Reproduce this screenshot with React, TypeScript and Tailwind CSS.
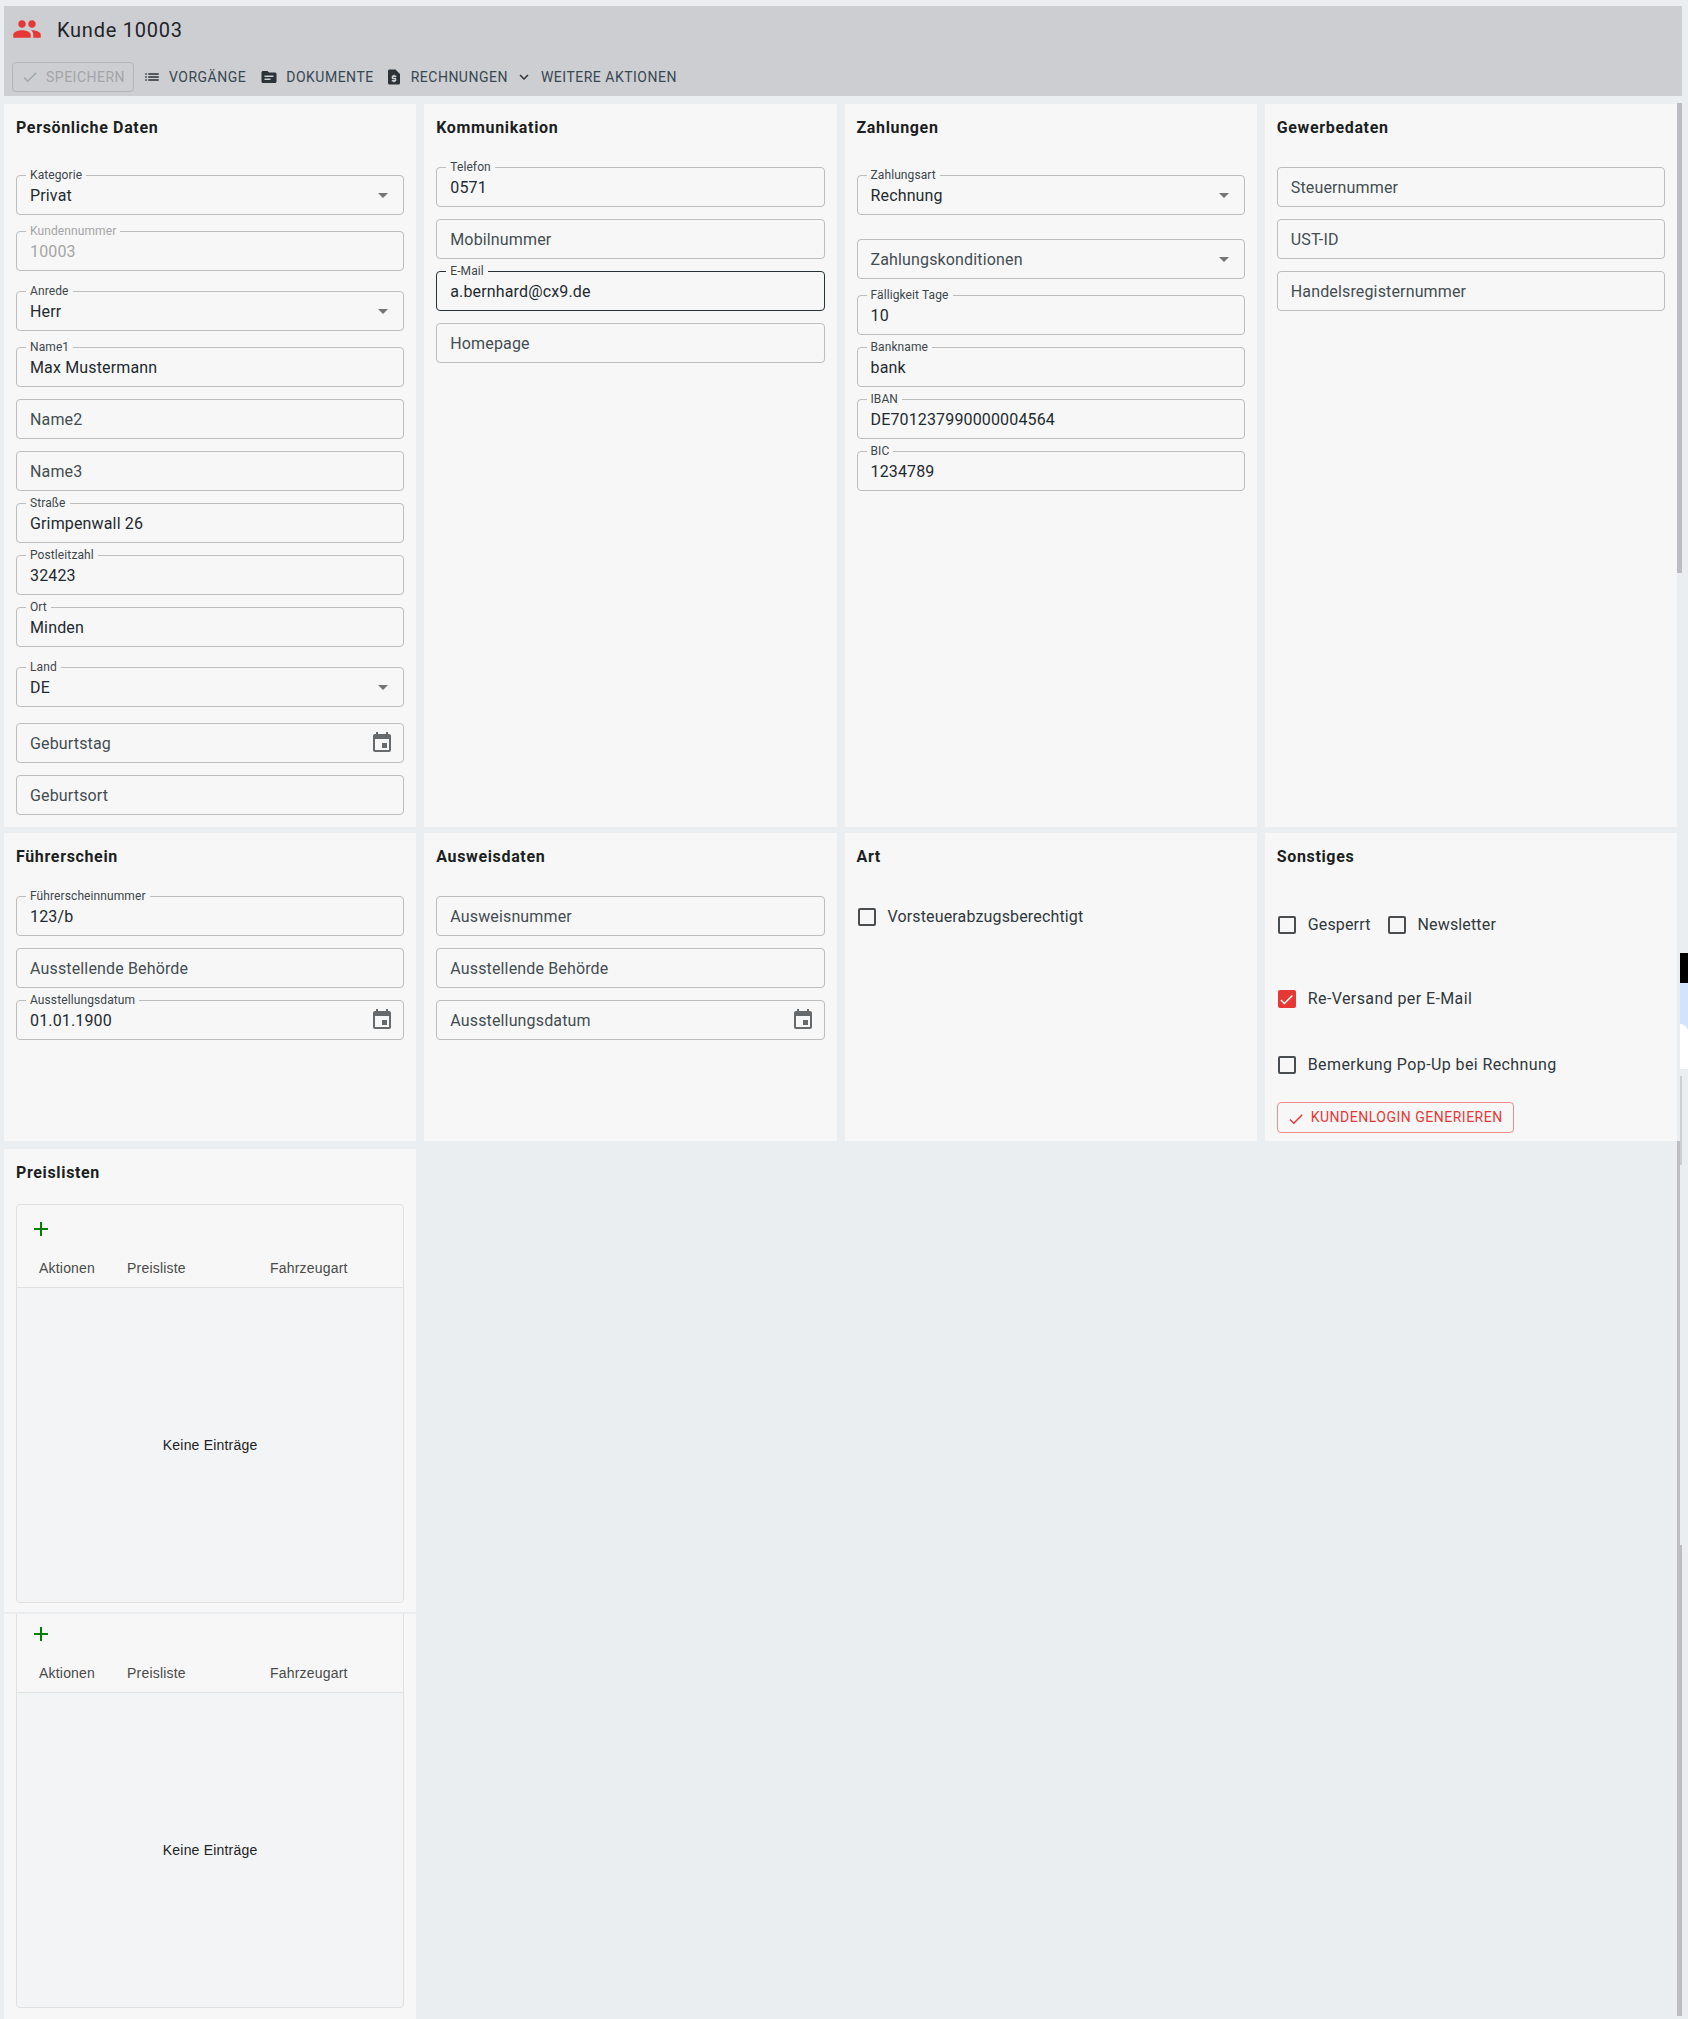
import React from "react";

const ICONS = {
  people:
    "M16 11c1.66 0 2.99-1.34 2.99-3S17.66 5 16 5c-1.66 0-3 1.34-3 3s1.34 3 3 3zm-8 0c1.66 0 2.99-1.34 2.99-3S9.66 5 8 5C6.34 5 5 6.34 5 8s1.34 3 3 3zm0 2c-2.33 0-7 1.17-7 3.5V19h14v-2.5c0-2.33-4.67-3.5-7-3.5zm8 0c-.29 0-.62.02-.97.05 1.16.84 1.97 1.97 1.97 3.45V19h6v-2.5c0-2.33-4.67-3.5-7-3.5z",
  check: "M9 16.17 4.83 12l-1.42 1.41L9 19 21 7l-1.41-1.41z",
  list: "M3 13h2v-2H3v2zm0 4h2v-2H3v2zm0-8h2V7H3v2zm4 4h14v-2H7v2zm0 4h14v-2H7v2zM7 7v2h14V7H7z",
  topic:
    "M20 6h-8l-2-2H4c-1.1 0-1.99.9-1.99 2L2 18c0 1.1.9 2 2 2h16c1.1 0 2-.9 2-2V8c0-1.1-.9-2-2-2zm-6 10H6v-2h8v2zm4-4H6v-2h12v2z",
  request:
    "M14 2H6c-1.1 0-1.99.9-1.99 2L4 20c0 1.1.89 2 1.99 2H18c1.1 0 2-.9 2-2V8l-6-6zm1 10h-4v1h3c.55 0 1 .45 1 1v3c0 .55-.45 1-1 1h-1v1h-2v-1H9v-2h4v-1h-3c-.55 0-1-.45-1-1v-3c0-.55.45-1 1-1h1V9h2v1h2v2z",
  expand: "M16.59 8.59 12 13.17 7.41 8.59 6 10l6 6 6-6z",
  event:
    "M17 12h-5v5h5v-5zM16 1v2H8V1H6v2H5c-1.11 0-1.99.9-1.99 2L3 19c0 1.1.89 2 2 2h14c1.1 0 2-.9 2-2V5c0-1.1-.9-2-2-2h-1V1h-2zm3 18H5V8h14v11z",
  arrow: "M7 10l5 5 5-5z",
  add: "M19 13h-6v6h-2v-6H5v-2h6V5h2v6h6v2z",
};

function Icon({ name, className }: { name: keyof typeof ICONS; className: string }) {
  return (
    <svg viewBox="0 0 24 24" fill="currentColor" className={`shrink-0 ${className}`}>
      <path d={ICONS[name]} />
    </svg>
  );
}

function Field({
  label,
  value,
  disabled,
  focused,
  calendar,
}: {
  label?: string;
  value?: string;
  disabled?: boolean;
  focused?: boolean;
  calendar?: boolean;
}) {
  const floating = label && value;
  return (
    <div
      className={`relative h-10 rounded-[4px] border flex items-center pl-[13px] pr-[9px] ${
        focused ? "border-[#263238]" : "border-[#bdbdbd]"
      }`}
    >
      {floating && (
        <span
          className={`absolute -top-[7px] left-[9px] px-1 bg-[#f7f7f7] text-[12px] leading-3 tracking-[0.1px] ${
            disabled ? "text-[#a5a5a5]" : "text-[#3d464b]"
          }`}
        >
          {label}
        </span>
      )}
      <span
        className={`flex-1 pt-[2px] text-[16px] tracking-[0.15px] ${
          disabled ? "text-[#a5a5a5]" : value ? "text-[#1f2a30]" : "text-[#444d52]"
        }`}
      >
        {value || label}
      </span>
      {calendar && <Icon name="event" className="w-6 h-6 text-[#666a6d]" />}
    </div>
  );
}

function SelectField({ label, value }: { label: string; value?: string }) {
  return (
    <div className="pt-2 pb-1">
      <div className="relative h-10 rounded-[4px] border border-[#bdbdbd] flex items-center pl-[13px] pr-[8px]">
        {value && (
          <span className="absolute -top-[7px] left-[9px] px-1 bg-[#f7f7f7] text-[12px] leading-3 tracking-[0.1px] text-[#3d464b]">
            {label}
          </span>
        )}
        <span className={`flex-1 pt-[2px] text-[16px] tracking-[0.15px] ${value ? "text-[#1f2a30]" : "text-[#444d52]"}`}>
          {value || label}
        </span>
        <Icon name="arrow" className="w-6 h-6 text-[#757575]" />
      </div>
    </div>
  );
}

function Panel({ title, children, className = "" }: { title: string; children?: React.ReactNode; className?: string }) {
  return (
    <section className={`bg-[#f7f7f7] px-3 pt-3 ${className}`}>
      <h2 className="h-6 text-[16px] leading-6 font-bold tracking-[0.65px] text-[#1c1f22] mb-[27px]">{title}</h2>
      {children}
    </section>
  );
}

function Check({
  label,
  checked,
  wide,
  className = "",
}: {
  label: string;
  checked?: boolean;
  wide?: boolean;
  className?: string;
}) {
  return (
    <div className={`flex items-center h-6 gap-3 pl-px ${className}`}>
      {checked ? (
        <div className="w-[18px] h-[18px] rounded-[2px] bg-[#e53935] flex items-center justify-center text-white">
          <Icon name="check" className="w-[17px] h-[17px]" />
        </div>
      ) : (
        <div className="w-[18px] h-[18px] rounded-[2px] border-2 border-[#4a4d50]" />
      )}
      <span className={`text-[16px] text-[#30383d] ${wide ? "tracking-[0.4px]" : "tracking-[0.15px]"}`}>{label}</span>
    </div>
  );
}

function PriceTable({ className = "" }: { className?: string }) {
  return (
    <div className={`h-[399px] rounded-[4px] border border-[#e0e0e0] flex flex-col font-['Liberation_Sans',Arial,sans-serif] ${className}`}>
      <div className="h-[83px] shrink-0 border-b border-[#e0e0e0] pl-3">
        <Icon name="add" className="w-6 h-6 mt-3 text-[#008000]" />
        <div className="grid grid-cols-[88px_143px_1fr] pl-2.5 mt-[18px] text-[14px] leading-[18px] tracking-[0.2px] text-[#4a4a4a]">
          <span>Aktionen</span>
          <span>Preisliste</span>
          <span>Fahrzeugart</span>
        </div>
      </div>
      <div className="flex-1 bg-[#f3f4f6] rounded-b-[4px] flex items-center justify-center text-[14px] tracking-[0.2px] text-[#222222]">
        Keine Einträge
      </div>
    </div>
  );
}

function ToolButton({
  icon,
  label,
  className = "",
}: {
  icon: keyof typeof ICONS;
  label: string;
  className?: string;
}) {
  return (
    <div className={`flex items-center gap-2 ${className}`}>
      <Icon name={icon} className="w-[18px] h-[18px] text-[#2b3238]" />
      <span className="text-[14px] tracking-[0.5px] uppercase text-[#37474f]">{label}</span>
    </div>
  );
}

export default function App() {
  return (
    <div className="relative h-[2019px] overflow-hidden bg-[#eaeef1] pl-1 pr-[11px] pt-[6px] font-['Roboto',sans-serif]">
      <header className="h-[90px] mr-[-5px] bg-[#cdced2] px-2 pt-2">
        <div className="flex items-center h-[30px]">
          <Icon name="people" className="w-[30px] h-[30px] text-[#e53935]" />
          <h1 className="ml-[15px] pt-[2px] text-[20px] tracking-[0.75px] text-[#1f2428]">Kunde 10003</h1>
        </div>
        <div className="flex items-center h-[30px] mt-[18px]">
          <div className="w-[122px] h-[30px] rounded-[4px] border border-[#b4b5b9] flex items-center pl-[8px] gap-[7px] text-[#a4a5a8]">
            <Icon name="check" className="w-[18px] h-[18px]" />
            <span className="text-[14px] tracking-[0.5px] uppercase">Speichern</span>
          </div>
          <ToolButton icon="list" label="Vorgänge" className="ml-[9px]" />
          <ToolButton icon="topic" label="Dokumente" className="ml-[14px]" />
          <ToolButton icon="request" label="Rechnungen" className="ml-[11px]" />
          <ToolButton icon="expand" label="Weitere Aktionen" className="ml-[7px]" />
        </div>
      </header>

      <main className="grid grid-cols-4 grid-rows-[723px_308px] gap-x-2 gap-y-[6px] mt-2">
        <Panel title="Persönliche Daten">
          <div className="flex flex-col gap-3">
            <SelectField label="Kategorie" value="Privat" />
            <Field label="Kundennummer" value="10003" disabled />
            <SelectField label="Anrede" value="Herr" />
            <Field label="Name1" value="Max Mustermann" />
            <Field label="Name2" />
            <Field label="Name3" />
            <Field label="Straße" value="Grimpenwall 26" />
            <Field label="Postleitzahl" value="32423" />
            <Field label="Ort" value="Minden" />
            <SelectField label="Land" value="DE" />
            <Field label="Geburtstag" calendar />
            <Field label="Geburtsort" />
          </div>
        </Panel>
        <Panel title="Kommunikation">
          <div className="flex flex-col gap-3">
            <Field label="Telefon" value="0571" />
            <Field label="Mobilnummer" />
            <Field label="E-Mail" value="a.bernhard@cx9.de" focused />
            <Field label="Homepage" />
          </div>
        </Panel>
        <Panel title="Zahlungen">
          <div className="flex flex-col gap-3">
            <SelectField label="Zahlungsart" value="Rechnung" />
            <SelectField label="Zahlungskonditionen" />
            <Field label="Fälligkeit Tage" value="10" />
            <Field label="Bankname" value="bank" />
            <Field label="IBAN" value="DE701237990000004564" />
            <Field label="BIC" value="1234789" />
          </div>
        </Panel>
        <Panel title="Gewerbedaten">
          <div className="flex flex-col gap-3">
            <Field label="Steuernummer" />
            <Field label="UST-ID" />
            <Field label="Handelsregisternummer" />
          </div>
        </Panel>

        <Panel title="Führerschein">
          <div className="flex flex-col gap-3">
            <Field label="Führerscheinnummer" value="123/b" />
            <Field label="Ausstellende Behörde" />
            <Field label="Ausstellungsdatum" value="01.01.1900" calendar />
          </div>
        </Panel>
        <Panel title="Ausweisdaten">
          <div className="flex flex-col gap-3">
            <Field label="Ausweisnummer" />
            <Field label="Ausstellende Behörde" />
            <Field label="Ausstellungsdatum" calendar />
          </div>
        </Panel>
        <Panel title="Art">
          <Check label="Vorsteuerabzugsberechtigt" className="mt-[36px]" />
        </Panel>
        <Panel title="Sonstiges">
          <div className="flex items-center mt-[44px]">
            <Check label="Gesperrt" />
            <Check label="Newsletter" className="ml-4" />
          </div>
          <Check label="Re-Versand per E-Mail" checked wide className="mt-[50px]" />
          <Check label="Bemerkung Pop-Up bei Rechnung" wide className="mt-[42px]" />
          <div className="w-[237px] h-[31px] mt-[25px] rounded-[4px] border border-[#f08c8c] flex items-center pl-[9px] gap-[6px] text-[#e53935]">
            <Icon name="check" className="w-[18px] h-[18px] mt-[3px]" />
            <span className="text-[14px] tracking-[0.5px] uppercase">Kundenlogin generieren</span>
          </div>
        </Panel>
      </main>

      <div className="grid grid-cols-4 gap-x-2 mt-2">
        <div className="flex flex-col gap-[2px]">
          <Panel title="Preislisten" className="h-[463px]">
            <PriceTable className="-mt-2" />
          </Panel>
          <section className="h-[405px] overflow-hidden bg-[#f7f7f7] px-3">
            <PriceTable className="-mt-[5px]" />
          </section>
        </div>
      </div>

      {/* scrollbars and the window edge at the right of the screenshot */}
      <div className="absolute left-[1677px] top-[103px] w-[5px] h-[470px] bg-[#bcbcc2]" />
      <div className="absolute left-[1677px] top-[1141px] w-[3px] h-[404px] bg-[#bcbcc2]" />
      <div className="absolute left-[1677px] top-[1545px] w-[5px] h-[471px] bg-[#bcbcc2]" />
      <div className="absolute left-[1680px] top-[1076px] w-[2px] h-[89px] bg-[#cdced2]" />
      <div className="absolute left-[1680px] top-[953px] w-2 h-[30px] bg-black" />
      <div className="absolute left-[1680px] top-[983px] w-2 h-[86px] bg-[#d3e3fd] overflow-hidden">
        <div className="h-full mt-[41px] bg-white rounded-tr-lg" />
      </div>
    </div>
  );
}
